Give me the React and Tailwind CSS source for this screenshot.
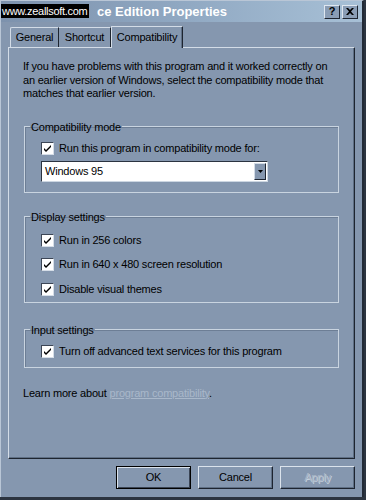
import React from "react";

const font = { fontFamily: '"Liberation Sans", Arial, sans-serif' };

function Check({ label }) {
  return (
    <div className="flex items-center h-[13px]">
      <span className="w-[13px] h-[13px] bg-white border-t border-l border-t-[#3c4656] border-l-[#3c4656] border-b border-r border-b-[#d6dee8] border-r-[#d6dee8] flex items-center justify-center shrink-0">
        <svg width="9" height="9" viewBox="0 0 9 9">
          <path d="M1 4 L3 6 L8 1 L8 3 L3 8 L1 6 Z" fill="#000" />
        </svg>
      </span>
      <span className="ml-[5px] text-[11px] text-black whitespace-nowrap leading-none">{label}</span>
    </div>
  );
}

function Group({ title, className, children }) {
  return (
    <fieldset className={`mx-[15px] border border-[#c9d4e0] shadow-[inset_1px_1px_0_#6d7e95] px-[16px] ${className}`}>
      <legend className="ml-[-11px] px-[1px] text-[11px] text-black leading-[12px]">{title}</legend>
      {children}
    </fieldset>
  );
}

function Btn({ children, dflt, disabled }) {
  return (
    <div
      className={`w-[75px] h-[23px] flex items-center justify-center text-[11px] ${
        dflt
          ? "border border-black shadow-[inset_1px_1px_0_#dbe3ec,inset_-1px_-1px_0_#3a4454]"
          : "border-t border-l border-t-[#dbe3ec] border-l-[#dbe3ec] border-b border-r border-b-[#1d2430] border-r-[#1d2430] shadow-[inset_-1px_-1px_0_#5e6f85]"
      } ${disabled ? "text-[#a9b6c6] [text-shadow:1px_1px_0_#c4d0dd]" : "text-black"}`}
    >
      {children}
    </div>
  );
}

export default function App() {
  return (
    <div style={font} className="w-[366px] h-[500px] bg-[#2c3440] overflow-hidden tracking-[-0.2px]">
      <div className="w-[364px] h-[497px] bg-[#8597af] border-l border-t border-l-[#b9c6d6] border-t-[#b9c6d6] border-r-2 border-r-[#222a36] flex flex-col">
        {/* title bar */}
        <div className="h-[21px] flex items-center bg-gradient-to-r from-[#7d92ad] via-[#90a8c2] to-[#a7c0d6] relative">
          <span className="absolute left-0 top-[3px] w-[88px] h-[14px] bg-black text-white text-[11px] leading-[14px] pl-[1px] tracking-[-0.3px] overflow-hidden whitespace-nowrap">
            www.zeallsoft.com
          </span>
          <span className="ml-[96px] text-white font-bold text-[13px] tracking-[0px]">ce Edition Properties</span>
          <div className="ml-auto flex gap-[2px] mr-[4px]">
            <span className="w-[16px] h-[14px] bg-[#8a9db5] border-t border-l border-t-[#dfe7f0] border-l-[#dfe7f0] border-b border-r border-b-[#1e2530] border-r-[#1e2530] flex items-center justify-center text-[11px] font-bold leading-none text-black">?</span>
            <span className="w-[16px] h-[14px] bg-[#8a9db5] border-t border-l border-t-[#dfe7f0] border-l-[#dfe7f0] border-b border-r border-b-[#1e2530] border-r-[#1e2530] flex items-center justify-center">
              <svg width="8" height="7" viewBox="0 0 8 7">
                <path d="M0 0 L2 0 L4 2 L6 0 L8 0 L5 3.5 L8 7 L6 7 L4 5 L2 7 L0 7 L3 3.5 Z" fill="#000" />
              </svg>
            </span>
          </div>
        </div>

        {/* tabs */}
        <div className="flex items-end h-[25px] pl-[9px]">
          <div className="h-[20px] w-[49px] flex items-center justify-center text-[11px] border-t border-l border-t-[#d3dce7] border-l-[#d3dce7] border-r border-r-[#1e2530] rounded-tl-[2px]">General</div>
          <div className="h-[20px] w-[52px] flex items-center justify-center text-[11px] border-t border-t-[#d3dce7] border-r border-r-[#1e2530]">Shortcut</div>
          <div className="h-[22px] w-[72px] mb-[-1px] z-10 bg-[#8597af] flex items-center justify-center text-[11px] border-t border-l border-t-[#d3dce7] border-l-[#d3dce7] border-r border-r-[#1e2530] shadow-[inset_-1px_0_0_#5e6f85]">Compatibility</div>
        </div>

        {/* panel */}
        <div className="mx-[7px] h-[412px] border-t border-l border-t-[#d3dce7] border-l-[#d3dce7] border-r border-b border-r-[#1e2530] border-b-[#1e2530] shadow-[inset_-1px_-1px_0_#5e6f85] flex flex-col">
          <p className="mt-[12px] ml-[14px] mr-[20px] text-[11px] leading-[13.5px] text-black">
            If you have problems with this program and it worked correctly on an earlier version of Windows, select the compatibility mode that matches that earlier version.
          </p>

          <Group title="Compatibility mode" className="mt-[20px] h-[72px] pt-[9px]">
            <Check label="Run this program in compatibility mode for:" />
            <div className="mt-[6px] w-[227px] h-[21px] bg-white border-t border-l border-t-[#2a3340] border-l-[#2a3340] border-b border-r border-b-[#cdd7e2] border-r-[#cdd7e2] flex items-center">
              <span className="ml-[3px] text-[11px] text-black">Windows 95</span>
              <span className="ml-auto mr-[1px] w-[12px] h-[17px] bg-[#8597af] border-t border-l border-t-[#d3dce7] border-l-[#d3dce7] border-b border-r border-b-[#1e2530] border-r-[#1e2530] flex items-center justify-center">
                <svg width="5" height="3" viewBox="0 0 5 3"><path d="M0 0 L5 0 L2.5 3 Z" fill="#000" /></svg>
              </span>
            </div>
          </Group>

          <Group title="Display settings" className="mt-[18px] h-[92px] pt-[11px] flex flex-col gap-[11.5px]">
            <Check label="Run in 256 colors" />
            <Check label="Run in 640 x 480 screen resolution" />
            <Check label="Disable visual themes" />
          </Group>

          <Group title="Input settings" className="mt-[21px] h-[44px] pt-[9px]">
            <Check label="Turn off advanced text services for this program" />
          </Group>

          <p className="mt-[17px] ml-[14px] text-[11px] text-black">
            Learn more about <span className="text-[#a9b8ca] underline">program compatibility</span>.
          </p>
        </div>

        {/* buttons */}
        <div className="flex justify-end gap-[7px] mt-[7px] mr-[7px]">
          <Btn dflt>OK</Btn>
          <Btn>Cancel</Btn>
          <Btn disabled>Apply</Btn>
        </div>
      </div>
    </div>
  );
}
